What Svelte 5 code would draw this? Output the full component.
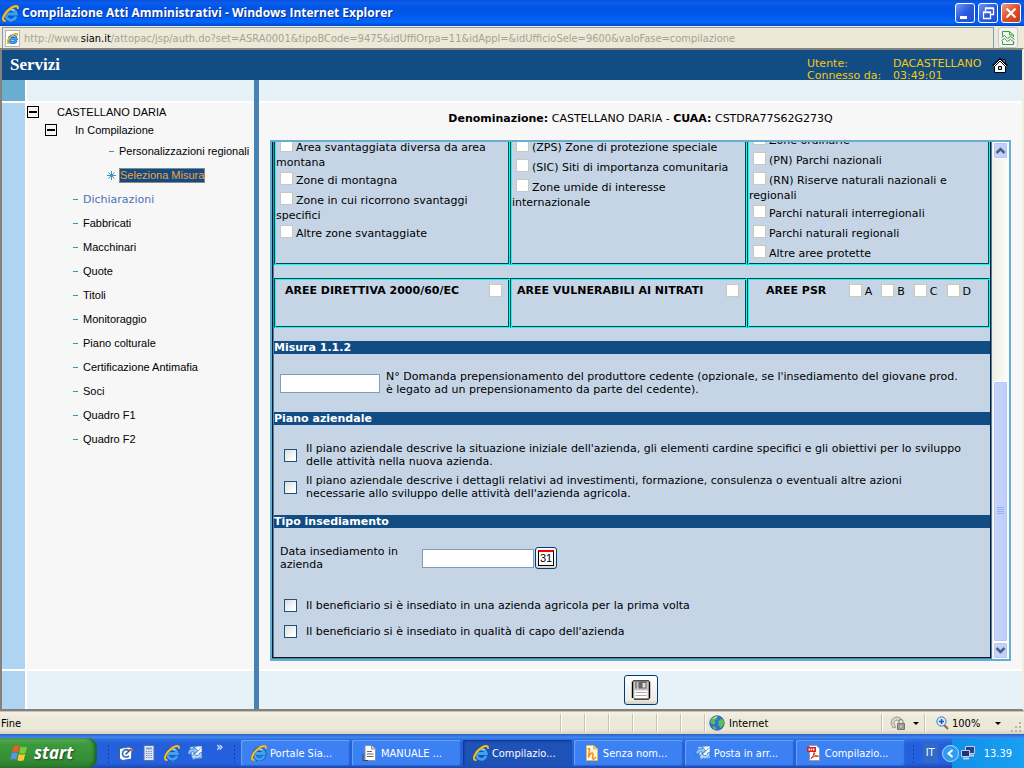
<script>
    import { onMount } from 'svelte'

    let pane

    const menu = ['Fabbricati', 'Macchinari', 'Quote', 'Titoli', 'Monitoraggio', 'Piano colturale',
        'Certificazione Antimafia', 'Soci', 'Quadro F1', 'Quadro F2']

    const zones = [
        ['Area svantaggiata diversa da area montana', 'Zone di montagna', 'Zone in cui ricorrono svantaggi specifici', 'Altre zone svantaggiate'],
        ['(ZPS) Zone di protezione speciale', '(SIC) Siti di importanza comunitaria', 'Zone umide di interesse internazionale'],
        ['Zone ordinarie', '(PN) Parchi nazionali', '(RN) Riserve naturali nazionali e regionali', 'Parchi naturali interregionali', 'Parchi naturali regionali', 'Altre aree protette']
    ]

    const tasks = [
        { icon: 'ie', label: 'Portale Sia...' },
        { icon: 'doc', label: 'MANUALE ...' },
        { icon: 'ie', label: 'Compilazio...', active: true },
        { icon: 'draw', label: 'Senza nom...' },
        { icon: 'mail', label: 'Posta in arr...' },
        { icon: 'pdf', label: 'Compilazio...' }
    ]

    // the form opens scrolled to the end
    onMount(() => {
        pane.scrollTop = pane.scrollHeight
    })
</script>

{#snippet icon(name, size)}
    <svg width={size} height={size} viewBox="0 0 16 16" aria-hidden="true">
        {#if name == 'ie'}
            <path d="M13.2 10.8A5 5 0 1 1 13.4 8.500H5" fill="none" stroke="#0f55b4" stroke-width="4.200" />
            <path d="M13.2 10.8A5 5 0 1 1 13.4 8.500H5" fill="none" stroke="#3fa2f0" stroke-width="2.800" />
            <path d="M4.500 6.500A5 5 0 0 1 11.500 5" fill="none" stroke="#a8defc" stroke-width="1.200" />
            <path d="M3.500 15C-1.500 15.500 1.500 8 7 3.800C11 .8 15.800-.4 14.800 3.600" fill="none" stroke="#b87a10" stroke-width="2.400" />
            <path d="M3.500 15C-1.500 15.500 1.500 8 7 3.800C11 .8 15.800-.4 14.800 3.600" fill="none" stroke="#fcc630" stroke-width="1.500" />
        {:else if name == 'doc'}
            <path d="M3 .5h6.5L13.5 4v11.5H3z" fill="#fff" stroke="#8a9299" />
            <path d="M9.5.5V4h4" fill="#cdd3d8" stroke="#8a9299" />
            <path d="M5 6.5h5M5 9h6.5M5 11.5h6.5" stroke="#666" />
            <path d="M1 9v6.5h5" fill="none" stroke="#444" />
        {:else if name == 'draw'}
            <path d="M2.5.5h7l4 3.500v11.500h-11z" fill="#fff7e4" stroke="#e8b65a" />
            <path d="M9.5.5V4h4" fill="#f3c878" stroke="#e8b65a" />
            <path d="M4 4.500c1-1.500 2-1 1.500 1L4.500 12.500c1-4 4-5.500 4.500-3.500s-1.500 4.500 0 5 2-1 3-2" fill="none" stroke="#e59a1e" stroke-width="1.600" />
        {:else if name == 'mail'}
            <path d="M3.500 2.500l11-1v11L6 14z" fill="#fff" stroke="#c2d3e8" />
            <path d="M5 4l5 3.500L14 2.500" fill="none" stroke="#7f9fc6" />
            <path d="M1 9C.5 4.500 4 3 7 4V1.800l3.800 3.700L7 9.200V7C4.500 6.500 3.500 7.500 3.500 9.500z" fill="#8cc4f7" stroke="#1c62bb" stroke-width=".7" />
            <path d="M15 7.500c.5 5-4 6.500-7 5.500v2.200l-4-3.700L8 8v2.200c3 .8 4.500 0 4.500-2.200z" fill="#b5dbfb" stroke="#1c62bb" stroke-width=".7" />
        {:else if name == 'pdf'}
            <path d="M3.500.5h7l3 3v12h-10z" fill="#fff" stroke="#999" />
            <path d="M1 2h9v5H1z" fill="#d6201c" />
            <path d="M2.500 4.500h6" stroke="#fff" stroke-dasharray="1.500 .7" stroke-width="2" />
            <path d="M5 13.500c2-2 3-4 3-6 0 3 2 4 4.500 3.700C10 10.500 7 11.500 5 13.500z" fill="none" stroke="#d6201c" />
        {:else if name == 'desktop'}
            <path d="M1.500 3.500l8.500-1.500 4 .5-.5 11.500-9 1.500-3-2z" fill="#fff" stroke="#39649b" />
            <path d="M11 5.500C8 3.500 4.500 5 4.500 8.500S8 13 11 11" fill="none" stroke="#266cc8" stroke-width="1.600" />
            <path d="M13 4L7.500 9.500" stroke="#33558c" stroke-width="1.600" />
            <circle cx="13.800" cy="5" r="1.600" fill="#e3641f" />
        {:else if name == 'calc'}
            <path d="M3 .5h10v15H3z" fill="#dce8f8" stroke="#5673a7" />
            <path d="M5 2.500h6v2H5z" fill="#7fa1d8" />
            <path d="M5 6.500h6M5 8.500h6M5 10.500h6M5 12.500h6" stroke="#6b87ba" stroke-dasharray="1.300 1" />
        {/if}
    </svg>
{/snippet}

<div class="window">
    <header class="titlebar">
        {@render icon('ie', 17)}
        <h1>Compilazione Atti Amministrativi - Windows Internet Explorer</h1>
        <button class="win" aria-label="Riduci a icona">
            <svg width="18" height="18"><path d="M4 12h7v3H4z" fill="#fff" /></svg>
        </button>
        <button class="win" aria-label="Ripristina">
            <svg width="18" height="18"><path d="M6.500 7V4.500h8v6H12M6 4h9M4.500 8.500h7v6h-7zM4 8h8" fill="none" stroke="#fff" stroke-width="1.300" /></svg>
        </button>
        <button class="win close" aria-label="Chiudi">
            <svg width="18" height="18"><path d="M4.500 4.500l9 9M13.500 4.500l-9 9" stroke="#fff" stroke-width="2.200" /></svg>
        </button>
    </header>

    <div class="address">
        <div class="url">
            <span class="favicon">{@render icon('ie', 11)}</span>
            <span>http://www.<b>sian.it</b>/attopac/jsp/auth.do?set=ASRA0001&amp;tipoBCode=9475&amp;idUffiOrpa=11&amp;idAppl=&amp;idUfficioSele=9600&amp;valoFase=compilazione</span>
        </div>
        <button class="compat" aria-label="Visualizzazione compatibilità">
            <svg width="14" height="16" fill="none" stroke="#3c9a4a">
                <path d="M1.500 6V1.500h7l4 3.500v2M8.500 1.500V5h4M1.500 11v3.500h11V12" />
                <path d="M.5 7.500l3-2 3 3 3-2 4 3M.5 10.500l3-2 3 3 3-2 4 3" />
            </svg>
        </button>
    </div>

    <div class="page">
        <div class="banner">
            <h2>Servizi</h2>
            <dl>
                <dt>Utente:</dt><dd>DACASTELLANO</dd>
                <dt>Connesso da:</dt><dd>03:49:01</dd>
            </dl>
            <a href="#home" aria-label="Home">
                <svg width="16" height="16" viewBox="0 0 16 16">
                    <path d="M11 1.500h2v5h-2z" fill="#fff" stroke="#000" />
                    <path d="M2.500 8v6.500h11V8L8 3z" fill="#fff" stroke="#000" />
                    <path d="M1 8.500l7-7 7 7" fill="none" stroke="#000" stroke-width="2.500" />
                    <path d="M1.500 8.500l6.500-6.500 6.500 6.500" fill="none" stroke="#fff" />
                    <path d="M6.500 8.500h3v3h-3z" fill="#ccc" stroke="#000" />
                </svg>
            </a>
        </div>

        <div class="columns">
            <div class="rail">
                <div class="top"></div>
                <div class="body"></div>
                <div class="bottom"></div>
            </div>

            <nav class="side">
                <div class="top"></div>
                <div class="body">
                    <div class="node"><button class="minus" aria-label="Comprimi"></button>CASTELLANO DARIA</div>
                    <div class="node sub"><button class="minus" aria-label="Comprimi"></button>In Compilazione</div>
                    <ul>
                        <li class="deep"><i></i><a href="#personalizzazioni">Personalizzazioni regionali</a></li>
                        <li class="deep">
                            <svg class="star" width="9" height="9" stroke="#3d94c0"><path d="M4.500 0v9M0 4.500h9M1.500 1.500l6 6M7.500 1.500l-6 6" /></svg>
                            <a href="#misura" class="current">Seleziona Misura</a>
                        </li>
                        <li><i></i><a href="#dichiarazioni" class="group">Dichiarazioni</a></li>
                        {#each menu as label}
                            <li><i></i><a href="#menu">{label}</a></li>
                        {/each}
                    </ul>
                </div>
                <div class="bottom"></div>
            </nav>

            <main class="main">
                <div class="top"></div>
                <div class="body">
                    <p class="who"><b>Denominazione:</b> CASTELLANO DARIA - <b>CUAA:</b> CSTDRA77S62G273Q</p>
                    <div class="frame">
                        <div class="pane" bind:this={pane}>
                            <form class="sheet">
                                <div class="cells">
                                    {#each zones as list}
                                        <div class="cell zone">
                                            {#each list as label}
                                                <label><input type="checkbox" class="pale" />{label}</label>
                                            {/each}
                                        </div>
                                    {/each}
                                </div>
                                <div class="cells areas">
                                    <div class="cell">
                                        <label for="direttiva">AREE DIRETTIVA 2000/60/EC</label>
                                        <input type="checkbox" class="pale" id="direttiva" />
                                    </div>
                                    <div class="cell">
                                        <label for="nitrati">AREE VULNERABILI AI NITRATI</label>
                                        <input type="checkbox" class="pale" id="nitrati" />
                                    </div>
                                    <div class="cell">
                                        <strong>AREE PSR</strong>
                                        <div class="psr">
                                            {#each ['A', 'B', 'C', 'D'] as letter}
                                                <label><input type="checkbox" class="pale" />{letter}</label>
                                            {/each}
                                        </div>
                                    </div>
                                </div>

                                <h3>Misura 1.1.2</h3>
                                <div class="domanda">
                                    <input type="text" id="domanda" />
                                    <label for="domanda">N° Domanda prepensionamento del produttore cedente (opzionale, se l'insediamento del giovane prod.<br />è legato ad un prepensionamento da parte del cedente).</label>
                                </div>

                                <h3>Piano aziendale</h3>
                                <div class="checks piano">
                                    <label><input type="checkbox" /><span>Il piano aziendale descrive la situazione iniziale dell'azienda, gli elementi cardine specifici e gli obiettivi per lo sviluppo<br />delle attività nella nuova azienda.</span></label>
                                    <label><input type="checkbox" /><span>Il piano aziendale descrive i dettagli relativi ad investimenti, formazione, consulenza o eventuali altre azioni<br />necessarie allo sviluppo delle attività dell'azienda agricola.</span></label>
                                </div>

                                <h3>Tipo insediamento</h3>
                                <div class="data">
                                    <label for="data">Data insediamento in azienda</label>
                                    <input type="text" id="data" />
                                    <button type="button" class="cal" aria-label="Calendario"><span>31</span></button>
                                </div>
                                <div class="checks tipo">
                                    <label><input type="checkbox" /><span>Il beneficiario si è insediato in una azienda agricola per la prima volta</span></label>
                                    <label><input type="checkbox" /><span>Il beneficiario si è insediato in qualità di capo dell'azienda</span></label>
                                </div>
                            </form>
                        </div>
                        <div class="scroll">
                            <button aria-label="Su"><svg width="11" height="7"><path d="M1.500 6l4-4 4 4" fill="none" stroke="#4d6185" stroke-width="2.500" /></svg></button>
                            <div class="gap"></div>
                            <div class="thumb"><svg width="7" height="8"><path d="M0 .5h7M0 2.500h7M0 4.500h7M0 6.500h7" stroke="#8fb2fa" /></svg></div>
                            <button aria-label="Giù"><svg width="11" height="7"><path d="M1.500 1l4 4 4-4" fill="none" stroke="#4d6185" stroke-width="2.500" /></svg></button>
                        </div>
                    </div>
                </div>
                <div class="bottom">
                    <button class="save" aria-label="Salva">
                        <svg width="20" height="20" viewBox="0 0 20 20">
                            <path d="M1.500 1h17v18H2.500l-1-1z" fill="#c4c4c4" />
                            <path d="M1.500 1.500v16.500M18.500 1.500v17" stroke="#000" stroke-width="1.400" />
                            <path d="M2 .8h16M3 19.200h15" stroke="#000" />
                            <path d="M4 1.500h2v7H4z" fill="#8d8d8d" />
                            <path d="M7.500 1.500h8v7h-8z" fill="#666" />
                            <path d="M11.500 3h3v4.500h-3z" fill="#ddd" />
                            <path d="M3.500 10.500h13V18h-13z" fill="#fff" />
                            <path d="M4.500 12.500h11M4.500 15.500h11" stroke="#aaa" />
                        </svg>
                    </button>
                </div>
            </main>
        </div>
    </div>

    <div class="status">
        <span class="done">Fine</span>
        <span class="slot"></span><span class="slot"></span><span class="slot"></span>
        <span class="slot"></span><span class="slot"></span><span class="slot"></span>
        <span class="net">
            <svg width="16" height="16" viewBox="0 0 16 16">
                <circle cx="8" cy="8" r="7.300" fill="#2f74d0" stroke="#1c4d96" stroke-width=".6" />
                <path d="M2 4.500C4 1.500 7 1 8.500 1.500L8 4 5.500 5.500 6.500 8 4.500 9.500 1.500 8zM9.500 6l3.500-2.500 2 3-.500 3.500-3 3-2-3zM4 11l3 1.500L6.500 15 4 13.500z" fill="#5cc04c" />
                <path d="M4 4c1-1.500 2.500-2 4-1.800" fill="none" stroke="#cfe9ff" />
            </svg>
            Internet
        </span>
        <button class="lock" aria-label="Modalità protetta">
            <svg width="16" height="16" viewBox="0 0 16 16">
                <path d="M1 8a6 6 0 0 1 10-4.500L9 6a3 3 0 0 0-5 3l2 3-3 1z" fill="#d8d8d8" stroke="#999" />
                <path d="M7.500 8.500h7v6h-7z" fill="#9a9a9a" stroke="#777" />
                <path d="M9 8V6.500a2 2 0 0 1 4 0V8" fill="none" stroke="#777" />
                <path d="M11 10.500v2" stroke="#fff" />
            </svg>
            <span class="caret"></span>
        </button>
        <button class="zoom">
            <svg width="13" height="14" viewBox="0 0 13 14">
                <path d="M8 9l4 4" stroke="#8a6a44" stroke-width="2.200" />
                <circle cx="5.500" cy="5.500" r="4.600" fill="#d8ebfc" stroke="#3176c8" />
                <path d="M5.500 3v5M3 5.500h5" stroke="#1a56b0" stroke-width="1.500" />
            </svg>
            100%
            <span class="caret"></span>
        </button>
        <svg class="grip" width="12" height="12" fill="#b8b4a2"><path d="M9 1h2v2H9zM9 5h2v2H9zM5 5h2v2H5zM9 9h2v2H9zM5 9h2v2H5zM1 9h2v2H1z" /></svg>
    </div>

    <footer class="taskbar">
        <button class="start">
            <svg width="20" height="18" viewBox="0 0 20 18">
                <path d="M3.500 2.500C5.500 1 7.500 1 9.500 2L8 8.300C6 7.300 4 7.300 2 8.500z" fill="#f0582a" />
                <path d="M10.500 2.500c2 1 4 1 6.500 0L15.500 9c-2.300 1-4.300 1-6.300 0z" fill="#7ccb3a" />
                <path d="M1.800 9.500c2-1.200 4-1.200 6-.200L6.300 15.500c-2-1-4-1-6 .2z" fill="#5a94f2" />
                <path d="M8.900 10c2 1 4 1 6.300 0l-1.500 6.300c-2.300 1-4.300 1-6.300 0z" fill="#fbcb2c" />
            </svg>
            start
        </button>
        <div class="handle"></div>
        <div class="quick">
            {#each ['desktop', 'calc', 'ie', 'mail'] as name}
                <button aria-label={name}>{@render icon(name, 16)}</button>
            {/each}
            <span class="more">»</span>
        </div>
        <div class="handle"></div>
        <div class="tasks">
            {#each tasks as task}
                <button class:active={task.active}>{@render icon(task.icon, 16)}{task.label}</button>
            {/each}
        </div>
        <div class="handle"></div>
        <span class="lang">IT</span>
        <div class="tray">
            <button aria-label="Mostra icone nascoste">
                <svg width="17" height="17"><circle cx="8.500" cy="8.500" r="8" fill="#2f9cf0" stroke="#a8dafc" /><path d="M10.500 5l-4 3.500 4 3.500" fill="none" stroke="#fff" stroke-width="2" /></svg>
            </button>
            <svg width="16" height="16" viewBox="0 0 16 16">
                <path d="M5.500 1.500h9v7h-9z" fill="#24418f" stroke="#c4cfe4" />
                <path d="M1.500 5.500h8v6h-8z" fill="#1c3478" stroke="#c4cfe4" />
                <path d="M3 13.500h6M10 10.500h4" stroke="#c4cfe4" stroke-width="2" />
            </svg>
            <time>13.39</time>
        </div>
    </footer>
</div>

<style>
    :global(body) {
        margin: 0;
    }

    .window {
        display: flex;
        flex-direction: column;
        height: 100vh;
        overflow: hidden;
        background: #ece9d8;
        font: 11px/13px "DejaVu Sans Condensed", "Noto Sans", sans-serif;
        color: #000;
    }

    .window * {
        box-sizing: border-box;
    }

    button {
        padding: 0;
        border: 0;
        background: none;
        font: inherit;
        color: inherit;
    }

    h1, h2, h3, p, ul, dl, dd {
        margin: 0;
        padding: 0;
    }

    svg {
        display: block;
        flex: none;
    }

    a {
        color: inherit;
        text-decoration: none;
    }

    /* title bar */
    .titlebar {
        display: flex;
        align-items: center;
        gap: 3px;
        flex: none;
        height: 26px;
        padding: 0 3px 0 2px;
        background: linear-gradient(#0a4fd8 0, #0a5ff0 12%, #0054e3 30%, #0058ee 60%, #0066ff 85%, #0048c8 100%);
    }

    h1 {
        flex: 1;
        white-space: nowrap;
        font: bold 12px/16px "Open Sans", sans-serif;
        color: #fff;
        text-shadow: 1px 1px #0a2f86;
    }

    .win {
        width: 20px;
        height: 20px;
        border: 1px solid #fff;
        border-radius: 3px;
        background: linear-gradient(135deg, #6f97f4, #2a5be0 50%, #1f4fd0);
    }

    .win.close {
        background: linear-gradient(135deg, #f09a80, #e0502a 50%, #c83a14);
    }

    .address {
        display: flex;
        flex: none;
        height: 22px;
        padding: 1px 6px 0 2px;
    }

    .url {
        display: flex;
        flex: 1;
        align-items: center;
        gap: 4px;
        margin-right: 4px;
        padding-left: 2px;
        border: solid #7f9db9;
        border-width: 1px 1px 0 1px;
        color: #a6a391;
        white-space: nowrap;
    }

    .url b {
        font-weight: normal;
        color: #000;
    }

    .favicon {
        padding: 2px 1px;
        border: 1px solid #b5b5b0;
        background: #fff;
    }

    .compat {
        display: flex;
        align-items: center;
        justify-content: center;
        width: 20px;
        border: 1px solid #c5c9cc;
        border-radius: 3px;
        background: #f5f5f0;
    }

    /* page */
    .page {
        display: flex;
        flex: 1;
        flex-direction: column;
        min-height: 0;
        border: 2px solid #85817a;
        border-right-color: #f1efe2;
        background: #fff;
        font: 11px/13px "DejaVu Sans", sans-serif;
    }

    .banner {
        display: flex;
        flex: none;
        height: 30px;
        overflow: hidden;
        background: #124c84;
    }

    h2 {
        flex: 1;
        padding-left: 8px;
        font: bold 17px/30px "Liberation Serif", serif;
        color: #fff;
    }

    .banner dl {
        display: grid;
        grid-template-columns: 86px 99px;
        align-content: start;
        padding-top: 8px;
        line-height: 12px;
        color: #f8c80a;
    }

    .banner a {
        padding: 8px 14px 0 0;
    }

    .columns {
        display: flex;
        flex: 1;
        min-height: 0;
    }

    .rail, .side, .main {
        display: flex;
        flex-direction: column;
    }

    .top {
        flex: none;
        height: 21px;
        margin-bottom: 2px;
        background: #e7f2f8;
    }

    .body {
        flex: 1;
        min-height: 0;
        background: #f7f7f7;
    }

    .bottom {
        display: flex;
        flex: none;
        align-items: center;
        justify-content: center;
        height: 38px;
        margin-top: 2px;
        background: #e7f2f8;
    }

    .rail {
        width: 23px;
        margin-right: 2px;
    }

    .rail .top {
        background: #69aed1;
    }

    .rail .body, .rail .bottom {
        background: #aed4f1;
    }

    .side {
        width: 232px;
        border-right: 5px solid #4682b4;
        font-family: "Liberation Sans", sans-serif;
    }

    .main {
        flex: 1;
        min-width: 0;
    }

    .main .body {
        display: flex;
        flex-direction: column;
        padding: 0 11px 8px;
    }

    /* tree */
    .node {
        display: flex;
        align-items: center;
        gap: 18px;
        height: 18px;
    }

    .node.sub {
        padding-left: 18px;
    }

    .minus {
        width: 12px;
        height: 12px;
        border: 1px solid #000;
        background: linear-gradient(#000, #000) center / 8px 2px no-repeat #fbf3ef;
    }

    .side ul {
        list-style: none;
    }

    .side li {
        display: flex;
        align-items: center;
        gap: 5px;
        height: 24px;
        padding-left: 46px;
        white-space: nowrap;
    }

    .side li.deep {
        padding-left: 82px;
    }

    .side i {
        width: 5px;
        height: 1px;
        background: #3d94c0;
    }

    .star {
        margin: 0 -2px 0 -2px;
    }

    .side .current {
        border: 1px solid #888;
        background: #124c84;
        color: #f8a030;
    }

    .side .group {
        font-family: "DejaVu Sans", sans-serif;
        color: #4a72b8;
    }

    /* form */
    .who {
        flex: none;
        padding: 9px 0 15px;
        text-align: center;
    }

    .frame {
        display: flex;
        flex: 1;
        min-height: 0;
        border: 2px solid #69aed1;
    }

    .pane {
        flex: 1;
        min-width: 0;
        overflow-y: auto;
        scrollbar-width: none;
        border: solid #4682b4;
        border-width: 0 1px 1px 0;
    }

    .sheet {
        border: 1px solid #101820;
        box-shadow: inset 1px 0 #4682b4;
        padding-left: 1px;
        background: #c6d5e6;
    }

    .cells {
        display: grid;
        grid-template-columns: 236fr 237fr 243fr;
        margin-bottom: 13px;
    }

    .cell {
        border: 1px solid;
        border-color: #004848 #0ff #0ff #004848;
        box-shadow: inset 1px 1px #0ff, inset -1px -1px #004848;
        padding: 8px 1px 2px;
    }

    .cell:last-child {
        padding-top: 1px;
    }

    .zone label {
        display: block;
    }

    .zone input {
        margin: 3px 3px 4px 4px;
        vertical-align: -5px;
    }

    input[type="checkbox"] {
        appearance: none;
        flex: none;
        width: 13px;
        height: 13px;
        border: 1px solid #1c5180;
        background: linear-gradient(135deg, #dcdcd7, #fff 80%);
    }

    input.pale[type="checkbox"] {
        border-color: #cac8bb;
        background: #fff;
    }

    .areas .cell {
        display: flex;
        align-items: flex-start;
        justify-content: space-between;
        height: 50px;
        padding: 5px 7px 0 10px;
        font-weight: bold;
        white-space: nowrap;
    }

    .areas .cell:nth-child(2) {
        padding-left: 6px;
    }

    .areas .cell:last-child {
        padding: 5px 18px 0;
    }

    .areas input {
        margin: 0;
    }

    .psr {
        display: flex;
        gap: 9px;
        font-weight: normal;
        line-height: 16px;
    }

    .psr label {
        display: flex;
        gap: 3px;
    }

    h3 {
        font: bold 11px/13px "DejaVu Sans", sans-serif;
        color: #fff;
        background: #124c84;
    }

    input[type="text"] {
        width: 100px;
        height: 19px;
        border: 1px solid #7f9db9;
        background: #fff;
        font: inherit;
    }

    .domanda {
        display: flex;
        align-items: center;
        gap: 6px;
        padding: 16px 6px;
        white-space: nowrap;
    }

    .checks label {
        display: flex;
        align-items: center;
        height: 32px;
        gap: 9px;
        white-space: nowrap;
    }

    .checks input {
        margin: 0;
    }

    .piano {
        padding: 14px 0 12px 10px;
    }

    .tipo {
        padding: 0 0 13px 10px;
    }

    .tipo label {
        height: 26px;
    }

    .data {
        display: flex;
        align-items: center;
        padding: 17px 6px 21px;
    }

    .data label {
        width: 142px;
        padding-right: 12px;
    }

    .data input[type="text"] {
        width: 112px;
    }

    .cal, .save {
        display: flex;
        align-items: center;
        justify-content: center;
        border: 1px solid #003c74;
        border-radius: 3px;
        background: linear-gradient(#fff, #ecebe5 85%, #d6d0c5);
    }

    .cal {
        width: 22px;
        height: 22px;
        margin-left: 1px;
    }

    .cal span {
        width: 16px;
        height: 16px;
        border: 1px solid #000;
        border-top: 2px solid #f00;
        background: #fff;
        font: 11px/13px "Liberation Sans", sans-serif;
        text-align: center;
    }

    .save {
        width: 34px;
        height: 30px;
    }

    .scroll {
        display: flex;
        flex: none;
        flex-direction: column;
        width: 17px;
        padding: 0 1px;
        background: linear-gradient(90deg, #eeede5, #fefefb);
    }

    .scroll button, .thumb {
        display: flex;
        align-items: center;
        justify-content: center;
        border: 1px solid #fff;
        border-radius: 2px;
        background: linear-gradient(90deg, #c8d6fb, #bccefa);
        box-shadow: inset 0 0 0 1px #b4c8f6;
    }

    .scroll button {
        flex: none;
        height: 17px;
    }

    .gap {
        flex: 222;
    }

    .thumb {
        flex: 260;
    }

    /* status bar */
    .status {
        display: flex;
        flex: none;
        align-items: center;
        height: 23px;
        border-top: 1px solid #c9c5b2;
        background: linear-gradient(#f3f1e6, #ece9d8 30%, #ebe8d7 80%, #d8d2bd);
    }

    .done {
        flex: 1;
        padding-left: 1px;
    }

    .slot, .net, .lock, .zoom {
        display: flex;
        align-items: center;
        height: 18px;
        border-left: 1px solid #c5c2b2;
        box-shadow: inset 1px 0 #fff;
    }

    .slot {
        width: 24px;
    }

    .net {
        width: 177px;
        gap: 4px;
        padding-left: 4px;
    }

    .lock {
        width: 43px;
        gap: 7px;
        padding-left: 8px;
    }

    .zoom {
        width: 84px;
        gap: 3px;
        padding: 0 7px 0 11px;
    }

    .caret {
        border: 3px solid transparent;
        border-top-color: #000;
        border-bottom: 0;
    }

    .zoom .caret {
        margin-left: auto;
    }

    .grip {
        align-self: flex-end;
        margin: 0 2px 1px;
    }

    /* taskbar */
    .taskbar {
        display: flex;
        flex: none;
        align-items: stretch;
        height: 34px;
        padding-top: 4px;
        background: linear-gradient(#2a60c8 0, #3f86f0 10%, #2f6fe4 16%, #245edb 30%, #2561e0 85%, #1c48b0 100%);
        color: #fff;
    }

    .start {
        display: flex;
        align-items: center;
        gap: 4px;
        width: 97px;
        padding-left: 10px;
        border-radius: 0 9px 9px 0;
        background: linear-gradient(#5fae60, #3c9a3c 20%, #358f35 70%, #2a7a2c);
        box-shadow: inset -3px 0 3px #20662a;
        font: italic bold 17px/26px "Open Sans", sans-serif;
        text-shadow: 1px 1px 2px #1c4a1c;
    }

    .handle {
        flex: none;
        width: 5px;
        margin: 6px 0 4px;
        background: radial-gradient(circle, #163f9e 1px, transparent 1px) 0 0 / 5px 4px;
    }

    .start + .handle {
        margin-left: 9px;
    }

    .quick {
        display: flex;
        align-items: center;
        gap: 7px;
        width: 121px;
        padding-left: 7px;
    }

    .more {
        align-self: flex-start;
        margin-left: 6px;
        padding-top: 2px;
        font-size: 13px;
    }

    .tasks {
        display: flex;
        flex: 1;
        gap: 2px;
        min-width: 0;
        padding: 2px 6px 2px 4px;
    }

    .tasks button {
        display: flex;
        flex: 1;
        align-items: center;
        gap: 3px;
        min-width: 0;
        padding-left: 10px;
        border-radius: 2px;
        background: #3c81f3;
        box-shadow: inset 1px 1px 1px #6ba2f8, inset -1px -1px 1px #2a62cc;
        white-space: nowrap;
    }

    .tasks button.active {
        background: #1e52b7;
        box-shadow: inset 1px 1px 2px #0e3487;
    }

    .lang {
        margin: 5px 4px 5px 7px;
        padding: 0 3px;
        background: #316ac5;
        line-height: 20px;
    }

    .tray {
        display: flex;
        align-items: center;
        gap: 1px;
        padding-right: 12px;
        background: linear-gradient(90deg, transparent 10px, #1290e8 10px, #18a0f2);
    }

    .tray time {
        margin-left: 7px;
    }
</style>
